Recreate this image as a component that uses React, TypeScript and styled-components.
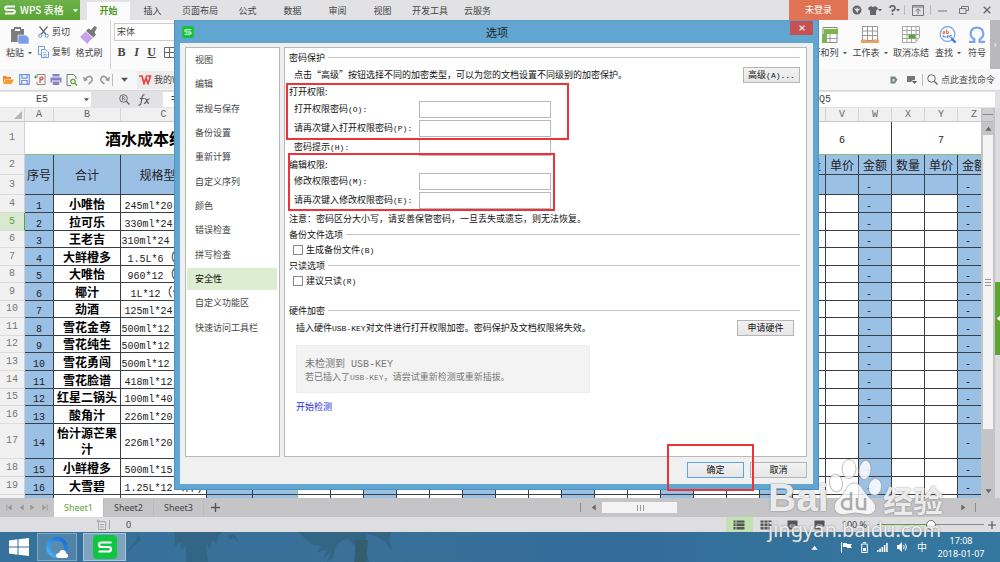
import React from "react";
import styled, { createGlobalStyle } from "styled-components";

const CJK = '"Noto Sans CJK SC", "Noto Sans", sans-serif';
const MONO = '"Liberation Mono", "Noto Sans CJK SC", monospace';

const GlobalStyle = createGlobalStyle`
  * { box-sizing: border-box; }
  body { margin: 0; font-family: ${CJK}; font-size: 9px; line-height: 14px; color: #444; overflow: hidden; }
  button, input, select { font: inherit; color: inherit; border-radius: 0; margin: 0; padding: 0; }
  button { border: 0; background: none; white-space: nowrap; }
  ul { list-style: none; margin: 0; padding: 0; }
  h1, h2, p { margin: 0; font-size: inherit; font-weight: normal; }
  svg { display: block; flex: none; }
`;

const Desktop = styled.div`
  position: relative;
  display: flex;
  flex-direction: column;
  height: 100vh;
  overflow: hidden;
  background: #dcdcde;
`;

/* ---------- title bar ---------- */
const TitleBar = styled.header`
  display: flex;
  flex: none;
  height: 20px;
  background: #e2e2e4;
`;
const Brand = styled.button`
  display: flex;
  align-items: center;
  gap: 4px;
  width: 80px;
  padding-left: 4px;
  color: #fff;
  font-size: 10px;
  font-weight: 500;
  background: linear-gradient(#6db24b, #5aa335);
`;
const BrandCaret = styled.span`
  margin-left: auto;
  padding-right: 2px;
`;
const TabStrip = styled.nav`
  display: flex;
  align-items: flex-end;
  padding-left: 7px;
`;
const RibbonTab = styled.button<{ $active?: boolean }>`
  min-width: ${(p) => (p.$active ? 43 : 45)}px;
  height: 18px;
  padding: 0 7px;
  line-height: 18px;
  color: ${(p) => (p.$active ? "#4a9a22" : "#444")};
  font-weight: ${(p) => (p.$active ? 700 : 400)};
  background: ${(p) => (p.$active ? "#fbfbfb" : "transparent")};
`;
const WindowTools = styled.div`
  display: flex;
  align-items: center;
  margin-left: auto;
  color: #555;
`;
const LoginButton = styled.button`
  align-self: stretch;
  width: 59px;
  color: #fff;
  background: #e07353;
`;
const ToolButton = styled.button<{ $w: number }>`
  display: flex;
  align-items: center;
  justify-content: center;
  width: ${(p) => p.$w}px;
  height: 20px;
`;
const Divider = styled.span<{ $h?: number }>`
  flex: none;
  width: 1px;
  height: ${(p) => p.$h ?? 10}px;
  background: #bbb;
`;

/* ---------- ribbon ---------- */
const Ribbon = styled.div`
  display: flex;
  flex: none;
  height: 49px;
  background: #fbfbfb;
`;
const BigTool = styled.button<{ $w: number }>`
  display: flex;
  flex-direction: column;
  align-items: center;
  width: ${(p) => p.$w}px;
  padding-top: 6px;
  gap: 2px;
`;
const ToolLabel = styled.span`
  display: flex;
  align-items: center;
  gap: 4px;
`;
const SmallTools = styled.div`
  display: flex;
  flex-direction: column;
  gap: 6px;
  padding-top: 5px;
`;
const SmallTool = styled.button`
  display: flex;
  align-items: center;
  gap: 3px;
  height: 14px;
`;
const FontGroup = styled.div`
  display: flex;
  flex-direction: column;
  gap: 4px;
  margin-left: 2px;
  padding: 3px 0 0 3px;
  border-left: 1px solid #d5d5d5;
`;
const FontSelect = styled.select`
  width: 90px;
  height: 18px;
  padding-left: 2px;
  appearance: none;
  border: 1px solid #ccc;
  background: #fff;
`;
const FormatRow = styled.div`
  display: flex;
  align-items: center;
  height: 14px;
`;
const FormatButton = styled.button<{ $kind: "b" | "i" | "u" }>`
  width: 15px;
  font-family: "Liberation Serif", serif;
  font-size: 12px;
  font-weight: 700;
  font-style: ${(p) => (p.$kind === "i" ? "italic" : "normal")};
  text-decoration: ${(p) => (p.$kind === "u" ? "underline" : "none")};
`;
const RibbonRight = styled.div`
  display: flex;
  margin-left: auto;
`;
const RibbonMore = styled.button`
  width: 10px;
  margin-left: 1px;
  color: #fff;
  background: #b9b9bc;
`;

/* ---------- quick access and formula bars ---------- */
const QuickBar = styled.div`
  display: flex;
  flex: none;
  align-items: center;
  height: 21px;
  background: #f7f7f7;
`;
const QuickButton = styled.button`
  display: flex;
  justify-content: center;
  width: 16px;
`;
const DocTab = styled.button`
  display: flex;
  align-items: center;
  gap: 2px;
  width: 90px;
  height: 18px;
  margin-left: 2px;
  padding-left: 2px;
  background: #ececed;
`;
const CommandSearch = styled.button`
  display: flex;
  align-items: center;
  gap: 3px;
  padding: 0 5px 0 4px;
`;
const FormulaBar = styled.div`
  display: flex;
  flex: none;
  align-items: center;
  height: 18px;
  padding-right: 5px;
  border-top: 1px solid #d8d8da;
  background: #e2e2e4;
`;
const NameBox = styled.label`
  display: flex;
  align-items: center;
  width: 91px;
  height: 15px;
  padding-right: 2px;
  background: #fff;
`;
const NameInput = styled.input`
  flex: 1;
  min-width: 0;
  border: 0;
  text-align: center;
  font-family: ${MONO};
  font-size: 10px;
  background: transparent;
`;
const FormulaTools = styled.div`
  display: flex;
  align-items: center;
  gap: 8px;
  width: 72px;
  padding-left: 28px;
`;
const FormulaInput = styled.input`
  flex: 1;
  min-width: 0;
  height: 15px;
  padding-left: 8px;
  border: 0;
  font-family: ${MONO};
  font-size: 10px;
  background: #fff;
`;

/* ---------- sheet ---------- */
const SheetArea = styled.main`
  display: flex;
  flex: 1;
  min-height: 0;
`;
const SheetView = styled.div`
  flex: 1;
  min-width: 0;
  overflow: hidden;
  background: #fff;
`;
const SheetTable = styled.table`
  width: 991px;
  table-layout: fixed;
  border-collapse: separate;
  border-spacing: 0;
  color: #222;
  font-size: 12px;
  line-height: 16px;
`;
const ColHead = styled.th`
  padding: 0;
  border-right: 1px solid #d4d4d4;
  border-bottom: 1px solid #c9c9c9;
  background: #f0f0f0;
  color: #666;
  font: 400 10px/13px ${MONO};
`;
const RowHead = styled.th<{ $on?: boolean }>`
  padding: 0;
  border-right: 1px solid ${(p) => (p.$on ? "#5aa335" : "#d0d0d0")};
  border-bottom: 1px solid #dcdcdc;
  background: ${(p) => (p.$on ? "#d8e9cf" : "#f1f1f1")};
  color: ${(p) => (p.$on ? "#5aa335" : "#777")};
  font: 400 10px/16px ${MONO};
`;
const Cell = styled.td<{ $blue?: boolean; $bold?: boolean; $freeze?: boolean; $dash?: boolean; $top?: boolean }>`
  padding: 0 ${(p) => (p.$dash ? 12 : 0)}px 0 0;
  overflow: hidden;
  text-align: center;
  border-right: 1px solid ${(p) => (p.$freeze ? "#8dc169" : "#3a3f45")};
  border-bottom: 1px solid ${(p) => (p.$top ? "#8dc169" : "#3a3f45")};
  background: ${(p) => (p.$blue ? "#9bc0e6" : "#fff")};
  font-weight: ${(p) => (p.$bold ? 700 : 400)};
  color: ${(p) => (p.$bold ? "#000" : "#222")};
  white-space: ${(p) => (p.$bold ? "normal" : "nowrap")};
`;
const TitleCell = styled(Cell)`
  font-size: 16px;
`;
const Half = styled.span<{ $size?: number }>`
  font-family: ${MONO};
  font-size: ${(p) => p.$size ?? 8}px;
  line-height: 0;
`;
const VScroll = styled.div`
  display: flex;
  flex-direction: column;
  align-items: center;
  width: 14px;
  background: #c4c4c6;
`;
const SplitHandle = styled.div`
  width: 10px;
  height: 14px;
  border-bottom: 1px solid #b4b4b6;
  background: linear-gradient(#cfcfd1 6px, #8a8a8c 6px, #8a8a8c 7px, #cfcfd1 7px);
`;
const ScrollArrow = styled.button`
  display: flex;
  align-items: center;
  justify-content: center;
  width: 12px;
  height: 13px;
`;
const VThumb = styled.div`
  display: flex;
  align-items: center;
  justify-content: center;
  flex: 294;
  width: 10px;
  background: #f3f3f3;
`;
const VRest = styled.div`
  flex: 56;
`;
const SideStrip = styled.div`
  display: flex;
  justify-content: flex-end;
  width: 5px;
  padding-top: 174px;
`;
const SideTab = styled.button`
  width: 5px;
  height: 73px;
  background: #5aa832;
`;

/* ---------- sheet tabs and status ---------- */
const SheetTabs = styled.div`
  display: flex;
  flex: none;
  align-items: center;
  height: 19px;
  background: #c5c5c7;
  font-family: "Noto Sans", ${CJK};
`;
const SheetNav = styled.div`
  display: flex;
  align-items: center;
  justify-content: space-between;
  width: 54px;
  padding: 0 6px;
`;
const SheetTab = styled.button<{ $active?: boolean }>`
  align-self: stretch;
  width: 50px;
  border-right: 1px solid #bcbcbe;
  color: ${(p) => (p.$active ? "#5aa335" : "#444")};
  background: ${(p) => (p.$active ? "#fff" : "transparent")};
`;
const AddSheet = styled.button`
  display: flex;
  justify-content: center;
  width: 22px;
`;
const HScroll = styled.div`
  display: flex;
  flex: 1;
  align-items: center;
  max-width: 396px;
  margin: 0 24px 0 auto;
  padding: 0 6px;
  border: solid #8d8d8f;
  border-width: 0 1px;
  height: 9px;
`;
const HTrack = styled.div`
  flex: 1;
`;
const HThumb = styled.div`
  display: flex;
  align-items: center;
  justify-content: center;
  width: 75px;
  height: 11px;
  margin-left: 3px;
  background: #f3f3f3;
`;
const StatusBar = styled.div`
  display: flex;
  flex: none;
  align-items: center;
  height: 15px;
  padding: 0 4px 0 96px;
  background: #dedee0;
  font-family: "Noto Sans", ${CJK};
`;
const StatusValue = styled.span`
  margin-left: 16px;
`;
const ViewButtons = styled.div`
  display: flex;
  margin-left: auto;
`;
const ViewButton = styled.button<{ $active?: boolean }>`
  display: flex;
  align-items: center;
  justify-content: center;
  width: 27px;
  height: 15px;
  background: ${(p) => (p.$active ? "#c3e2b3" : "transparent")};
`;
const ZoomLabel = styled.label`
  display: flex;
  align-items: center;
  gap: 10px;
  margin-left: 8px;
`;
const ZoomRange = styled.input`
  width: 107px;
  height: 11px;
  margin-right: 4px;
  appearance: none;
  background: linear-gradient(90deg, #5aa335 50%, #888 50%) center / 100% 1px no-repeat;
  &::-webkit-slider-thumb {
    appearance: none;
    width: 10px;
    height: 10px;
    border: 1px solid #777;
    border-radius: 50%;
    background: #fff;
  }
`;

/* ---------- taskbar ---------- */
const Taskbar = styled.footer`
  position: relative;
  display: flex;
  flex: none;
  align-items: center;
  height: 30px;
  color: #fff;
  font-family: "Noto Sans", ${CJK};
  background: linear-gradient(90deg, #35719b, #3a7099 35%, #336d99 60%, #34789f);
`;
const Wallpaper = styled.svg`
  position: absolute;
  left: 124px;
  top: 0;
`;
const StartButton = styled.button`
  display: flex;
  justify-content: center;
  width: 37px;
`;
const TaskButton = styled.button<{ $active?: boolean }>`
  display: flex;
  align-items: center;
  justify-content: center;
  width: ${(p) => (p.$active ? 43 : 40)}px;
  height: 28px;
  margin-right: 6px;
  border: 1px solid ${(p) => (p.$active ? "#a9c5d8" : "#7fa6c0")};
  background: ${(p) => (p.$active ? "#7ea3bd" : "#4f84a8")};
`;
const Tray = styled.div`
  display: flex;
  align-items: center;
  gap: 9px;
  margin-left: auto;
  padding-right: 14px;
  font-size: 10px;
`;
const TrayMore = styled.button`
  margin-right: 14px;
`;
const Clock = styled.time`
  width: 50px;
  text-align: center;
  font-size: 9px;
  line-height: 13px;
  white-space: nowrap;
`;

/* ---------- dialog ---------- */
const Dialog = styled.section`
  position: absolute;
  left: 174px;
  top: 20px;
  width: 645px;
  padding: 0 5px 5px;
  border: 1px solid #4d93c2;
  border-top-color: #5b9dc8;
  background: #61a5d1;
  color: #111;
`;
const DialogTitle = styled.header`
  display: flex;
  align-items: center;
  height: 22px;
  padding-left: 2px;
`;
const DialogName = styled.h1`
  flex: 1;
  padding-left: 10px;
  text-align: center;
  font-size: 11px;
  color: #222;
`;
const CloseButton = styled.button`
  display: flex;
  align-items: center;
  justify-content: center;
  align-self: flex-start;
  width: 23px;
  height: 14px;
  background: #c75050;
`;
const DialogBody = styled.div`
  padding: 4px 6px 6px 5px;
  background: #f0f0f0;
`;
const Columns = styled.div`
  display: flex;
  gap: 4px;
  height: 410px;
`;
const NavPanel = styled.nav`
  width: 95px;
  padding: 1px;
  border: 1px solid #b8b8b8;
  background: #fff;
`;
const NavList = styled.ul`
  display: grid;
  grid-auto-rows: 1fr;
  height: 292px;
`;
const NavItem = styled.button<{ $active?: boolean }>`
  width: 90px;
  height: 22px;
  padding-left: 8px;
  text-align: left;
  color: ${(p) => (p.$active ? "#111" : "#444")};
  background: ${(p) => (p.$active ? "#dcedd2" : "transparent")};
`;
const Content = styled.form`
  flex: 1;
  padding: 1px 6px 0 4px;
  border: 1px solid #b8b8b8;
  background: #fff;
`;
const Legend = styled.h2<{ $gap?: number }>`
  display: flex;
  align-items: center;
  gap: 3px;
  height: 17px;
  margin-top: ${(p) => p.$gap ?? 0}px;
  &::after {
    content: "";
    flex: 1;
    height: 1px;
    background: #c4c4c4;
  }
`;
const Row = styled.div<{ $indent?: number; $right?: number }>`
  display: flex;
  align-items: center;
  justify-content: space-between;
  height: 17px;
  padding: 0 ${(p) => p.$right ?? 0}px 0 ${(p) => p.$indent ?? 0}px;
`;
const GroupLabel = styled.p<{ $tight?: boolean }>`
  height: ${(p) => (p.$tight ? 15 : 18)}px;
  line-height: ${(p) => (p.$tight ? 13 : 18)}px;
`;
const Field = styled.label`
  display: flex;
  height: 19px;
  padding-left: 5px;
  line-height: 16px;
`;
const FieldText = styled.span`
  width: 125px;
`;
const TextBox = styled.input`
  width: 132px;
  height: 17px;
  border: 1px solid #b5b8bf;
  background: #fff;
`;
const Note = styled.p`
  line-height: 15px;
`;
const CheckLabel = styled.label`
  display: flex;
  align-items: center;
  gap: 3px;
  height: 13px;
  padding-left: 4px;
`;
const CheckBox = styled.input`
  width: 10px;
  height: 10px;
  appearance: none;
  border: 1px solid #888;
  background: #fff;
`;
const PushButton = styled.button<{ $focus?: boolean }>`
  width: 57px;
  height: 16px;
  border: 1px solid ${(p) => (p.$focus ? "#5aa5ee" : "#b5b5b5")};
  line-height: 14px;
  background: linear-gradient(#f2f2f2, #e6e6e6);
`;
const KeyBox = styled.div`
  width: 294px;
  height: 48px;
  margin: 9px 0 7px 7px;
  padding: 10px 8px;
  border: 1px solid #eee;
  background: #f3f3f3;
  color: #777;
`;
const KeyTitle = styled.p`
  font-size: 10px;
`;
const DetectLink = styled.a`
  margin-left: 7px;
  color: #2a2ae0;
  text-decoration: none;
`;
const DialogFooter = styled.footer`
  display: flex;
  justify-content: flex-end;
  gap: 6px;
  padding-top: 5px;
`;
const Mark = styled.span<{ $x: number; $y: number; $w: number; $h: number }>`
  position: absolute;
  left: ${(p) => p.$x}px;
  top: ${(p) => p.$y}px;
  width: ${(p) => p.$w}px;
  height: ${(p) => p.$h}px;
  border: 2px solid #ee3338;
  pointer-events: none;
`;

/* ---------- watermark ---------- */
const Watermark = styled.div`
  position: absolute;
  right: 54px;
  bottom: 20px;
  width: 178px;
  color: rgba(255, 255, 255, 0.85);
  text-shadow: 0 0 2px rgba(110, 110, 110, 0.9);
  pointer-events: none;
`;
const WatermarkTop = styled.div`
  display: flex;
  align-items: flex-end;
  height: 63px;
`;
const MarkLatin = styled.span`
  width: 61px;
  font: 700 39px/40px "Liberation Sans", sans-serif;
`;
const MarkHan = styled.span`
  font-size: 30px;
  font-weight: 700;
  line-height: 38px;
  white-space: nowrap;
`;
const MarkUrl = styled.p`
  font: 400 20px/24px "Noto Sans", sans-serif;
  white-space: nowrap;
`;

/* ---------- icons ---------- */
const Caret = ({ color = "#555", size = 5 }: { color?: string; size?: number }) => (
  <svg width={size} height={size} viewBox="0 0 6 6"><path d="M0 1.5h6L3 5z" fill={color} /></svg>
);
const Arrow = ({ dir, color = "#666", bar }: { dir: "u" | "d" | "l" | "r"; color?: string; bar?: boolean }) => {
  const angle = { u: 0, r: 90, d: 180, l: 270 }[dir];
  return (
    <svg width="7" height="7" viewBox="0 0 8 8">
      <g transform={`rotate(${angle} 4 4)`} fill={color}>
        <path d="M0.5 6.5 4 2l3.500 4.500z" />
        {bar && <path d="M0.500 0.500h7v1h-7z" />}
      </g>
    </svg>
  );
};
const WpsS = ({ size, color = "#fff", box }: { size: number; color?: string; box?: string }) => (
  <svg width={size} height={size} viewBox="0 0 24 24">
    {box && <rect width="24" height="24" rx="4" fill={box} />}
    <path
      d={box ? "M18.500 7.500H8.500Q6 7.500 6 9.700T8.500 12h7q2.500 0 2.500 2.200t-2.500 2.300H5.500" : "M22 5H6Q2.500 5 2.500 8.500T6 12h12q3.500 0 3.500 3.500T18 19H2"}
      fill="none" stroke={color} strokeWidth={box ? 2.2 : 4}
    />
  </svg>
);
const PasteIcon = () => (
  <svg width="20" height="18" viewBox="0 0 20 18">
    <path d="M2 3h3V1h7v2h3v13H2z" fill="#7d7d7d" /><path d="M6 3h5v2H6z" fill="#fbfbfb" />
    <path d="M9 9h8l3 3v6H9z" fill="#7ba0ea" stroke="#fbfbfb" strokeWidth=".6" />
  </svg>
);
const CutIcon = () => (
  <svg width="11" height="12" viewBox="0 0 11 12" fill="none">
    <path d="M1.500 0.500 8 8.500M9.500 0.500 3 8.500" stroke="#666" strokeWidth="1.200" />
    <circle cx="2.300" cy="9.700" r="1.600" stroke="#5a8ee0" /><circle cx="8.700" cy="9.700" r="1.600" stroke="#5a8ee0" />
  </svg>
);
const CopyIcon = () => (
  <svg width="11" height="12" viewBox="0 0 11 12" fill="#fff" stroke="#6f9be6">
    <path d="M.5.5h6v8h-6z" /><path d="M3.500 3.500h4l3 2.500v5.500h-7z" /><path d="M5 6.500h3M5 8.500h4M5 10h4" strokeWidth=".7" />
  </svg>
);
const BrushIcon = () => (
  <svg width="20" height="18" viewBox="0 0 20 18">
    <path d="M18 1.500 15.500 0 12 4 9.500 2.500 7 5l7.500 6.500L17 8.500l-1.500-2z" fill="#777" />
    <path d="M6.500 5.500 14 12l-4 3.500-1.500 2.500L1 11z" fill="#c9a0f0" />
  </svg>
);
const BorderIcon = () => (
  <svg width="11" height="11" viewBox="0 0 11 11" fill="none" stroke="#666"><path d="M.5.5h10v10H.5zM5.500.5v10M.5 5.500h10" /></svg>
);
const FolderIcon = () => (
  <svg width="12" height="11" viewBox="0 0 12 11"><path d="M1 9V2h3l1 1h4v2H3z" fill="#f28a1c" /><path d="M3.500 5.500H12L9.500 10H1z" fill="#f79a32" /></svg>
);
const SaveIcon = () => (
  <svg width="11" height="11" viewBox="0 0 11 11" fill="none" stroke="#6b93e6" strokeWidth="1.200"><path d="M.7.7h9.600v9.600H.7zM3 .7v3.500h5V.7M2.800 10.300V6.500h5.400v3.800" /></svg>
);
const PdfIcon = () => (
  <svg width="12" height="11" viewBox="0 0 12 11" fill="none">
    <path d="M3 4V.5h8v10H3V8" stroke="#8a8a8a" /><path d="M6 9V3.500q3-1 3 .7T6 6" stroke="#e04a4a" strokeWidth="1.200" /><path d="M0 3l3 0M1.500 1.500v3" stroke="#58a838" />
  </svg>
);
const PrintIcon = () => (
  <svg width="12" height="11" viewBox="0 0 12 11" fill="#8580c8"><path d="M2.500 0h7v2.500h-7zM.5 3.500h11V8.500H10V6.500H2v2H.5zM2.700 7.500h6.600V11H2.700z" /></svg>
);
const PreviewIcon = () => (
  <svg width="12" height="12" viewBox="0 0 12 12" fill="none"><path d="M1 .5h6.500L10 3v2M1 .5v11h4" stroke="#777" /><circle cx="7" cy="7.500" r="2.200" stroke="#58a838" strokeWidth="1.200" /><path d="m8.700 9.200 2.300 2.300" stroke="#58a838" strokeWidth="1.500" /></svg>
);
const UndoIcon = ({ flip }: { flip?: boolean }) => (
  <svg width="11" height="10" viewBox="0 0 11 10" fill="none">
    <g transform={flip ? "matrix(-1 0 0 1 11 0)" : undefined}>
      <path d="M2 4.500Q6-.5 8.500 2.500T5.500 9" stroke="#9a9a9a" strokeWidth="1.600" /><path d="M0 1.500 1 6.500 5 5z" fill="#9a9a9a" />
    </g>
  </svg>
);
const WIcon = () => (
  <svg width="13" height="10" viewBox="0 0 13 10" fill="none" stroke="#e8433f" strokeWidth="1.700"><path d="M0 1h3l2 7.500L7 3l2 5.500L11.500 1H7" /></svg>
);
const MagnifierIcon = ({ reg }: { reg?: boolean }) => (
  <svg width="11" height="11" viewBox="0 0 11 11" fill="none" stroke="#666">
    <circle cx="4.500" cy="4.500" r="3.800" /><path d="m7.500 7.500 3 3" strokeWidth="1.400" />
    {reg && <path d="M3.500 6.500v-4h1.300q1.500 1 0 2H3.500M4.800 4.500l1 2" strokeWidth=".8" />}
  </svg>
);
const FxIcon = () => (
  <svg width="13" height="12" viewBox="0 0 13 12" fill="none" stroke="#555" strokeWidth="1.100">
    <path d="M.5 11q2 .5 2.500-2L4.300 2.500Q5 .2 6.500 1M1.800 4.500h4M6.500 5q1.500-1 2.200 1.500T11 9.500M11.800 4.800Q9.500 5 8.500 7.200T6 9.500" />
  </svg>
);
const RowColIcon = () => (
  <svg width="20" height="18" viewBox="0 0 20 18"><path d="M4 1.500h14v15H4z" fill="#fff" stroke="#888" /><path d="M5 3h14v5H5z" fill="#7ab648" /><path d="M3 8h5v9H3z" fill="#7ab648" /><path d="M11 8v8M4 12.500h14" stroke="#999" /></svg>
);
const WorksheetIcon = () => (
  <svg width="18" height="18" viewBox="0 0 18 18"><path d="M1.500.5h15v14h-15zM6.500.5v14M11.500.5v14M1.500 5h15M1.500 9.500h15" fill="#fff" stroke="#9a9a9a" /><path d="M0 13.500h5l1 1.500h6l1-1.500h5V17H0z" fill="#efa05e" /></svg>
);
const FreezeIcon = () => (
  <svg width="18" height="18" viewBox="0 0 18 18"><path d="M.5.5h17v11l-4 5H.5zM5 .5v16M9.500.5v16M14 .5v15M.5 4.500h17M.5 8.500h17M.5 12.500h15" fill="#fff" stroke="#a5a5a5" /><path d="M6.500 8.500h7v4h-7z" fill="#5aa335" /></svg>
);
const FindIcon = () => (
  <svg width="18" height="18" viewBox="0 0 19 19" fill="none">
    <circle cx="9" cy="8.500" r="7.800" stroke="#6ba0e6" strokeWidth="1.200" /><path d="m13 13 4.500 4.500" stroke="#3f7fdc" strokeWidth="2.500" />
    <path d="M4 5.500h2v2.500H4V7h2M8 3.500V8h2V6H8" stroke="#e0764a" /><path d="M4.500 9.500v2h3M9.500 9.500v2.500h-1v-1.200h1M13.500 10h-2v2h2" stroke="#3f7fdc" />
  </svg>
);
const OmegaIcon = () => (
  <svg width="18" height="18" viewBox="0 0 17 17" fill="none" stroke="#7ba3ee" strokeWidth="2"><path d="M1 15h5v-2.500Q2.500 10.500 2.500 7 3 1.500 8.500 1.500T14.500 7q0 3.500-3.500 5.500V15h5" /></svg>
);
const BurstIcon = () => (
  <svg width="10" height="10" viewBox="0 0 10 10"><circle cx="5" cy="5" r="4.500" fill="#666" /><path d="M2 3l2.500 1L5 2l1 2 2.500-.5L6 6 5.500 8 4 6z" fill="#e2e2e4" /></svg>
);
const ShirtIcon = () => (
  <svg width="10" height="9" viewBox="0 0 10 9"><path d="M3 0 0 2l1 2.500 1-.5v5h6V4l1 .5L10 2 7 0Q5 2 3 0z" fill="#666" /></svg>
);
const HelpIcon = () => (
  <svg width="7" height="10" viewBox="0 0 7 10" fill="none" stroke="#666" strokeWidth="1.700"><path d="M1 3q0-2.200 2.500-2.200T6 3 3.500 5.300V7M3.500 8.200V10" /></svg>
);
const UpBoxIcon = () => (
  <svg width="12" height="11" viewBox="0 0 12 11" fill="none" stroke="#777"><path d="M.5.5h11v10H.5zM.5 2h11M6 9V4M3.500 6 6 3.800 8.500 6" /></svg>
);
const RestoreIcon = () => (
  <svg width="10" height="8" viewBox="0 0 10 8" fill="none" stroke="#777"><path d="M2.500 2.500v-2h7v4H7M.5 2.500h6.500v5H.5z" /></svg>
);
const CrossIcon = ({ color = "#666", size = 8, w = 1.3 }: { color?: string; size?: number; w?: number }) => (
  <svg width={size} height={size} viewBox="0 0 8 8"><path d="m.7.7 6.600 6.600m0-6.600L.7 7.300" stroke={color} strokeWidth={w} /></svg>
);
const MinusIcon = () => <svg width="9" height="8" viewBox="0 0 9 8"><path d="M0 5h9" stroke="#777" /></svg>;
const PlusIcon = ({ size = 9 }: { size?: number }) => (
  <svg width={size} height={size} viewBox="0 0 9 9"><path d="M0 4.500h9M4.500 0v9" stroke="#555" strokeWidth="1.300" /></svg>
);
const DocIcon = () => (
  <svg width="8" height="8" viewBox="0 0 8 8"><path d="M.5.5H5l2.500 3-2.500 4H.5z" fill="#788" /><path d="M2.500 3h2v2.500h-2z" fill="#dde" /></svg>
);
const FlagIcon = () => (
  <svg width="10" height="8" viewBox="0 0 10 8"><path d="M0 0h8v4H6L4 6H0z" fill="#777" /><path d="M5 5h5L7.500 8z" fill="#555" /></svg>
);
const GripIcon = ({ vertical }: { vertical?: boolean }) => (
  <svg width="8" height="8" viewBox="0 0 8 8"><path d={vertical ? "M1 1.500h6M1 4.500h6M1 7.500h6" : "M1.500 1v6M4.500 1v6M7.500 1v6"} stroke="#999" /></svg>
);
const CalcIcon = () => (
  <svg width="14" height="11" viewBox="0 0 14 11" fill="none" stroke="#aaa"><path d="M2.500 2.500h7v8h-7zM4 5.500h4M4 8h4M.5 2h3M2 .5v3M13.500 1v9" /></svg>
);
const GridIcon = ({ kind }: { kind: number }) => (
  <svg width="12" height="10" viewBox="0 0 12 10">
    <path d={kind < 2 ? "M.5.5h11v9H.5z" : "M.5.5h10v6h-3v3h-7z"} fill="#555" />
    <path d={kind === 0 ? "M3 0v10M0 3h12M0 6.500h12" : kind === 1 ? "M4 0v10M8 0v10M0 3h12M0 6.500h12" : "M3 5h5v2H3z"} stroke={kind ? "#dedee0" : "#c3e2b3"} fill="none" strokeWidth=".8" />
  </svg>
);
const WindowsIcon = () => (
  <svg width="20" height="18" viewBox="0 0 20 18" fill="#fff"><path d="M0 2.500 8.500 1.300v7.200H0zM9.500 1.200 20 0v8.500H9.500zM0 9.500h8.500v7.200L0 15.500zM9.500 9.500H20V18L9.500 16.800z" /></svg>
);
const BrowserIcon = () => (
  <svg width="24" height="23" viewBox="0 0 24 23">
    <defs><linearGradient id="ring" x1="0" y1="1" x2="1" y2="0"><stop offset="0" stopColor="#49b5f5" /><stop offset="1" stopColor="#1669dd" /></linearGradient></defs>
    <circle cx="12" cy="11.500" r="8.700" fill="#5b8cab" stroke="url(#ring)" strokeWidth="4" />
    <path d="M14 22q-3.500-.3-3-3 .6-2 3-2 1-3.500 4.200-3 3 .6 3 3.600 2.300.6 2 2.600-.4 1.800-2.200 1.800z" fill="#fff" />
  </svg>
);
const TrayFlag = () => <svg width="11" height="11" viewBox="0 0 11 11" fill="#fff"><path d="M0 0h1v11H0zM2 1h4v1h5L9.500 4l1.500 2H6V5H2z" /></svg>;
const Battery = () => <svg width="7" height="11" viewBox="0 0 7 11" fill="none" stroke="#fff"><path d="M2 .5h3M.7 2h5.600v8.500H.7z" /><path d="M2 6h3v3H2z" fill="#fff" stroke="none" /></svg>;
const Signal = () => <svg width="11" height="9" viewBox="0 0 11 9" fill="#fff"><path d="M0 7h1.500v2H0zM2.300 5.500h1.500V9H2.300zM4.600 4h1.500v5H4.600zM6.900 2h1.500v7H6.900zM9.200 0h1.500v9H9.200z" /></svg>;
const Speaker = () => <svg width="11" height="10" viewBox="0 0 11 10" fill="#fff"><path d="M0 3h2l3-3v10L2 7H0z" /><path d="M6.500 3q1.500 2 0 4M8.200 1.500q2.500 3.500 0 7" fill="none" stroke="#fff" /></svg>;
const Paw = () => (
  <svg width="54" height="60" viewBox="0 0 54 60">
    <g fill="rgba(255,255,255,.82)" stroke="rgba(150,150,150,.6)">
      <ellipse cx="7" cy="25" rx="6.500" ry="9" transform="rotate(-10 7 25)" />
      <ellipse cx="20" cy="11" rx="7" ry="9.500" />
      <ellipse cx="36" cy="12" rx="6" ry="9.500" transform="rotate(8 36 12)" />
      <ellipse cx="46" cy="29" rx="6.500" ry="8.500" transform="rotate(10 46 29)" />
      <path d="M25 25q6 0 10 8 4 6 9 10 5 6 1 11-4 4-11 2-8-2-15 0-8 2-12-2-4-6 1-12 5-4 8-9 3-8 9-8z" />
    </g>
    <g fill="none" stroke="rgba(140,140,140,.7)" strokeWidth="2.500">
      <path d="M22 34v17h-5q-4-1-4-5t4-5h4M28 40v7q0 4 3 4h5V40" />
    </g>
  </svg>
);

/* Sets runs of half-width characters in the monospaced face. */
const Mixed = ({ text, size = 8 }: { text: string; size?: number }) => (
  <>
    {text.split(/([\x20-\x7e]+)/).map((part, i) => (i % 2 ? <Half key={i} $size={size}>{part}</Half> : part))}
  </>
);

/* ---------- data ---------- */
const tabs = ["开始", "插入", "页面布局", "公式", "数据", "审阅", "视图", "开发工具", "云服务"];
const letters = "ABCDEFGHIJKLMNOPQRSTUVWXYZ".split("");
const columnWidths = [25, 29, 67, 86, 46, 45, ...Array(21).fill(33)];
const groups = [1, 2, 3, 4, 5, 6, 7];
const dayColumns = Array.from({ length: 21 }, (_, i) => i);
const dayHeads = ["数量", "单价", "金额"];
const rows: [string, string, number][] = [
  ["小唯怡", "245ml*20（件)", 18],
  ["拉可乐", "330ml*24（件)", 18],
  ["王老吉", "310ml*24（件）", 17],
  ["大鲜橙多", "1.5L*6（件）", 18],
  ["大唯怡", "960*12（件）", 17],
  ["椰汁", "1L*12（件）", 18],
  ["劲酒", "125ml*24（件)", 17],
  ["雪花金尊", "500ml*12（件）", 18],
  ["雪花纯生", "500ml*12（件）", 17],
  ["雪花勇闯", "500ml*12（件）", 18],
  ["雪花脸谱", "418ml*12（件)", 18],
  ["红星二锅头", "100ml*40（件)", 17],
  ["酸角汁", "226ml*20（件)", 18],
  ["怡汁源芒果汁", "226ml*20（件)", 35],
  ["小鲜橙多", "500ml*15（件)", 18],
  ["大雪碧", "1.25L*12（件)", 18],
  ["大可乐", "1.25L*12（件)", 18],
];
const columnName = (n: number): string => (n > 26 ? columnName(Math.floor((n - 1) / 26)) : "") + letters[(n - 1) % 26];
const formula = "=" + Array.from({ length: 29 }, (_, i) => columnName(11 + i * 3) + "5").join("+");
const navItems = ["视图", "编辑", "常规与保存", "备份设置", "重新计算", "自定义序列", "颜色", "错误检查", "拼写检查", "安全性", "自定义功能区", "快速访问工具栏"];
const noop = () => {};

const PasswordField = ({ label }: { label: string }) => (
  <Field>
    <FieldText><Mixed text={label} /></FieldText>
    <TextBox type="password" autoComplete="off" />
  </Field>
);

const Sheet = () => (
  <SheetTable>
    <colgroup>{columnWidths.map((w, i) => <col key={i} width={w} />)}</colgroup>
    <thead>
      <tr height={14}>
        <ColHead aria-label="全选">
          <svg width="23" height="11" viewBox="0 0 23 11"><path d="M22 2v8h-8z" fill="#b5b5b5" /></svg>
        </ColHead>
        {letters.map((l) => <ColHead key={l}>{l}</ColHead>)}
      </tr>
    </thead>
    <tbody>
      <tr height={33}>
        <RowHead>1</RowHead>
        <TitleCell colSpan={5} $bold $top $freeze>酒水成本统计表</TitleCell>
        {groups.map((g) => <Cell key={g} colSpan={3} $top><Half $size={10}>{g}</Half></Cell>)}
      </tr>
      <tr height={20}>
        <RowHead>2</RowHead>
        {["序号", "合计", "规格型号", "单位", "单价"].map((t, i) => (
          <Cell key={i} rowSpan={2} $blue $freeze={i === 4}>{t}</Cell>
        ))}
        {dayColumns.map((d) => <Cell key={d} $blue>{dayHeads[d % 3]}</Cell>)}
      </tr>
      <tr height={20}>
        <RowHead>3</RowHead>
        {dayColumns.map((d) => <Cell key={d} $blue $dash={d % 3 === 2}>{d % 3 === 2 ? <Half $size={10}>-</Half> : null}</Cell>)}
      </tr>
      {rows.map(([name, spec, h], i) => (
        <tr key={i} height={h}>
          <RowHead $on={i === 1}>{i + 4}</RowHead>
          <Cell $blue><Half $size={10}>{i + 1}</Half></Cell>
          <Cell $bold>{name}</Cell>
          <Cell><Mixed text={spec} size={10} /></Cell>
          <Cell $blue />
          <Cell $blue $freeze />
          {dayColumns.map((d) => (
            <Cell key={d} $blue={d % 3 === 2} $dash={d % 3 === 2}>{d % 3 === 2 ? <Half $size={10}>-</Half> : null}</Cell>
          ))}
        </tr>
      ))}
    </tbody>
  </SheetTable>
);

const OptionsDialog = () => (
  <Dialog role="dialog" aria-label="选项">
    <DialogTitle>
      <WpsS size={12} box="#17c13e" />
      <DialogName>选项</DialogName>
      <CloseButton aria-label="关闭"><CrossIcon color="#fff" size={6} w={1.5} /></CloseButton>
    </DialogTitle>
    <DialogBody>
      <Columns>
        <NavPanel>
          <NavList>
            {navItems.map((t) => <li key={t}><NavItem $active={t === "安全性"}>{t}</NavItem></li>)}
          </NavList>
        </NavPanel>
        <Content onSubmit={(e) => e.preventDefault()}>
          <Legend>密码保护</Legend>
          <Row $indent={5}>
            <p>点击“高级”按钮选择不同的加密类型，可以为您的文档设置不同级别的加密保护。</p>
            <PushButton type="button"><Mixed text="高级(A)..." /></PushButton>
          </Row>
          <GroupLabel>打开权限:</GroupLabel>
          <PasswordField label="打开权限密码(O):" />
          <PasswordField label="请再次键入打开权限密码(P):" />
          <PasswordField label="密码提示(H):" />
          <GroupLabel $tight>编辑权限:</GroupLabel>
          <PasswordField label="修改权限密码(M):" />
          <PasswordField label="请再次键入修改权限密码(E):" />
          <Note>注意：密码区分大小写，请妥善保管密码，一旦丢失或遗忘，则无法恢复。</Note>
          <Legend>备份文件选项</Legend>
          <CheckLabel><CheckBox type="checkbox" /><span><Mixed text="生成备份文件(B)" /></span></CheckLabel>
          <Legend $gap={1}>只读选项</Legend>
          <CheckLabel><CheckBox type="checkbox" /><span><Mixed text="建议只读(R)" /></span></CheckLabel>
          <Legend $gap={15}>硬件加密</Legend>
          <Row $indent={7} $right={6}>
            <p><Mixed text="插入硬件USB-KEY对文件进行打开权限加密。密码保护及文档权限将失效。" /></p>
            <PushButton type="button">申请硬件</PushButton>
          </Row>
          <KeyBox>
            <KeyTitle><Mixed text="未检测到 USB-KEY" size={10} /></KeyTitle>
            <p><Mixed text="若已插入了USB-KEY，请尝试重新检测或重新插拔。" /></p>
          </KeyBox>
          <DetectLink href="#detect">开始检测</DetectLink>
        </Content>
      </Columns>
      <DialogFooter>
        <PushButton $focus>确定</PushButton>
        <PushButton>取消</PushButton>
      </DialogFooter>
    </DialogBody>
    <Mark $x={111} $y={62} $w={283} $h={57} />
    <Mark $x={113} $y={132} $w={267} $h={58} />
    <Mark $x={492} $y={423} $w={87} $h={47} />
  </Dialog>
);

export default function App() {
  return (
    <Desktop lang="zh-CN">
      <GlobalStyle />
      <TitleBar>
        <Brand><WpsS size={12} />WPS 表格<BrandCaret><Caret color="#fff" /></BrandCaret></Brand>
        <TabStrip>{tabs.map((t, i) => <RibbonTab key={t} $active={i === 0}>{t}</RibbonTab>)}</TabStrip>
        <WindowTools>
          <LoginButton>未登录</LoginButton>
          <ToolButton $w={17} aria-label="云"><BurstIcon /></ToolButton>
          <ToolButton $w={19} aria-label="皮肤"><ShirtIcon /><Caret size={4} /></ToolButton>
          <ToolButton $w={20} aria-label="帮助"><HelpIcon /><Caret size={4} /></ToolButton>
          <Divider />
          <ToolButton $w={25} aria-label="隐藏功能区"><UpBoxIcon /></ToolButton>
          <Divider />
          <ToolButton $w={23} aria-label="最小化"><MinusIcon /></ToolButton>
          <ToolButton $w={19} aria-label="还原"><RestoreIcon /></ToolButton>
          <ToolButton $w={27} aria-label="关闭窗口"><CrossIcon /></ToolButton>
        </WindowTools>
      </TitleBar>

      <Ribbon>
        <BigTool $w={38}><PasteIcon /><ToolLabel>粘贴<Caret size={4} /></ToolLabel></BigTool>
        <SmallTools>
          <SmallTool><CutIcon />剪切</SmallTool>
          <SmallTool><CopyIcon />复制</SmallTool>
        </SmallTools>
        <BigTool $w={38}><BrushIcon />格式刷</BigTool>
        <FontGroup>
          <FontSelect aria-label="字体" defaultValue="宋体"><option>宋体</option></FontSelect>
          <FormatRow>
            <FormatButton $kind="b">B</FormatButton>
            <FormatButton $kind="i">I</FormatButton>
            <FormatButton $kind="u">U</FormatButton>
            <ToolButton $w={20} aria-label="边框"><BorderIcon /></ToolButton>
          </FormatRow>
        </FontGroup>
        <RibbonRight>
          <BigTool $w={40}><RowColIcon /><ToolLabel>行和列<Caret size={4} /></ToolLabel></BigTool>
          <BigTool $w={42}><WorksheetIcon /><ToolLabel>工作表<Caret size={4} /></ToolLabel></BigTool>
          <BigTool $w={40}><FreezeIcon />取消冻结</BigTool>
          <BigTool $w={34}><FindIcon /><ToolLabel>查找<Caret size={4} /></ToolLabel></BigTool>
          <BigTool $w={24}><OmegaIcon />符号</BigTool>
          <RibbonMore aria-label="更多">›</RibbonMore>
        </RibbonRight>
      </Ribbon>

      <QuickBar>
        <QuickButton aria-label="打开"><FolderIcon /></QuickButton>
        <QuickButton aria-label="保存"><SaveIcon /></QuickButton>
        <QuickButton aria-label="输出PDF"><PdfIcon /></QuickButton>
        <QuickButton aria-label="打印"><PrintIcon /></QuickButton>
        <QuickButton aria-label="预览"><PreviewIcon /></QuickButton>
        <QuickButton aria-label="撤销"><UndoIcon /></QuickButton>
        <QuickButton aria-label="重做"><UndoIcon flip /></QuickButton>
        <Divider $h={12} />
        <ToolButton $w={22} aria-label="自定义"><Caret size={7} /></ToolButton>
        <DocTab><WIcon />我的WPS</DocTab>
        <WindowTools>
          <ToolButton $w={17} aria-label="文档"><DocIcon /></ToolButton>
          <ToolButton $w={19} aria-label="标记"><FlagIcon /></ToolButton>
          <Divider $h={12} />
          <CommandSearch><MagnifierIcon />点此查找命令</CommandSearch>
        </WindowTools>
      </QuickBar>

      <FormulaBar>
        <NameBox><NameInput aria-label="名称框" value="E5" onChange={noop} /><Caret size={5} /></NameBox>
        <FormulaTools><MagnifierIcon reg /><FxIcon /></FormulaTools>
        <FormulaInput aria-label="编辑栏" value={formula} onChange={noop} />
      </FormulaBar>

      <SheetArea>
        <SheetView><Sheet /></SheetView>
        <VScroll>
          <SplitHandle />
          <ScrollArrow aria-label="向上"><Arrow dir="u" /></ScrollArrow>
          <VThumb><GripIcon vertical /></VThumb>
          <VRest />
          <ScrollArrow aria-label="向下"><Arrow dir="d" /></ScrollArrow>
        </VScroll>
        <SideStrip><SideTab aria-label="展开"><Arrow dir="l" color="#fff" /></SideTab></SideStrip>
      </SheetArea>

      <SheetTabs>
        <SheetNav>
          <Arrow dir="l" color="#999" bar /><Arrow dir="l" color="#999" /><Arrow dir="r" color="#999" /><Arrow dir="r" color="#999" bar />
        </SheetNav>
        <SheetTab $active>Sheet1</SheetTab>
        <SheetTab>Sheet2</SheetTab>
        <SheetTab>Sheet3</SheetTab>
        <AddSheet aria-label="新建工作表"><PlusIcon /></AddSheet>
        <HScroll>
          <ScrollArrow aria-label="向左"><Arrow dir="l" /></ScrollArrow>
          <HThumb><GripIcon /></HThumb>
          <HTrack />
          <ScrollArrow aria-label="向右"><Arrow dir="r" /></ScrollArrow>
        </HScroll>
      </SheetTabs>

      <StatusBar>
        <CalcIcon />
        <StatusValue>0</StatusValue>
        <ViewButtons>
          {[0, 1, 2, 3].map((k) => <ViewButton key={k} $active={k === 0} aria-label={`视图${k + 1}`}><GridIcon kind={k} /></ViewButton>)}
        </ViewButtons>
        <ZoomLabel>100 %<ZoomRange type="range" min="10" max="190" defaultValue="100" /></ZoomLabel>
        <PlusIcon size={8} />
      </StatusBar>

      <Taskbar>
        <Wallpaper width="280" height="30" viewBox="0 0 280 30" aria-hidden="true">
          <g fill="#2f5f78" opacity=".6">
            <path d="M50 0h48l-4 6-2 7-4-6-2 10-4-6 2 19H62V14l-4 4-2-8-5 4z" />
            <path d="M174 0h94l-3 8 4 12-8-10-10-6-8-2-2 10 4 18h-14V14l-8-8-10 6-4 14-6 4 4-10-8 6 4-8-10 2 4-6-10-2z" />
            <path d="M4 18 12 8l2-6 3 6-8 6-6 8zM104 4l6-2 6 10-6-6-4 2z" />
          </g>
          <path d="M232 8h12l-2 22h-12z" fill="#355a63" opacity=".7" />
        </Wallpaper>
        <StartButton aria-label="开始菜单"><WindowsIcon /></StartButton>
        <TaskButton aria-label="浏览器"><BrowserIcon /></TaskButton>
        <TaskButton $active aria-label="WPS"><WpsS size={24} box="#10c640" /></TaskButton>
        <Tray>
          <TrayMore aria-label="显示隐藏的图标"><Arrow dir="u" color="#fff" /></TrayMore>
          <TrayFlag /><Battery /><Signal /><Speaker /><span>中</span>
          <Clock>17:08<br />2018-01-07</Clock>
        </Tray>
      </Taskbar>

      <OptionsDialog />

      <Watermark>
        <WatermarkTop><MarkLatin>Bai</MarkLatin><Paw /><MarkHan>经验</MarkHan></WatermarkTop>
        <MarkUrl>jingyan.baidu.com</MarkUrl>
      </Watermark>
    </Desktop>
  );
}
